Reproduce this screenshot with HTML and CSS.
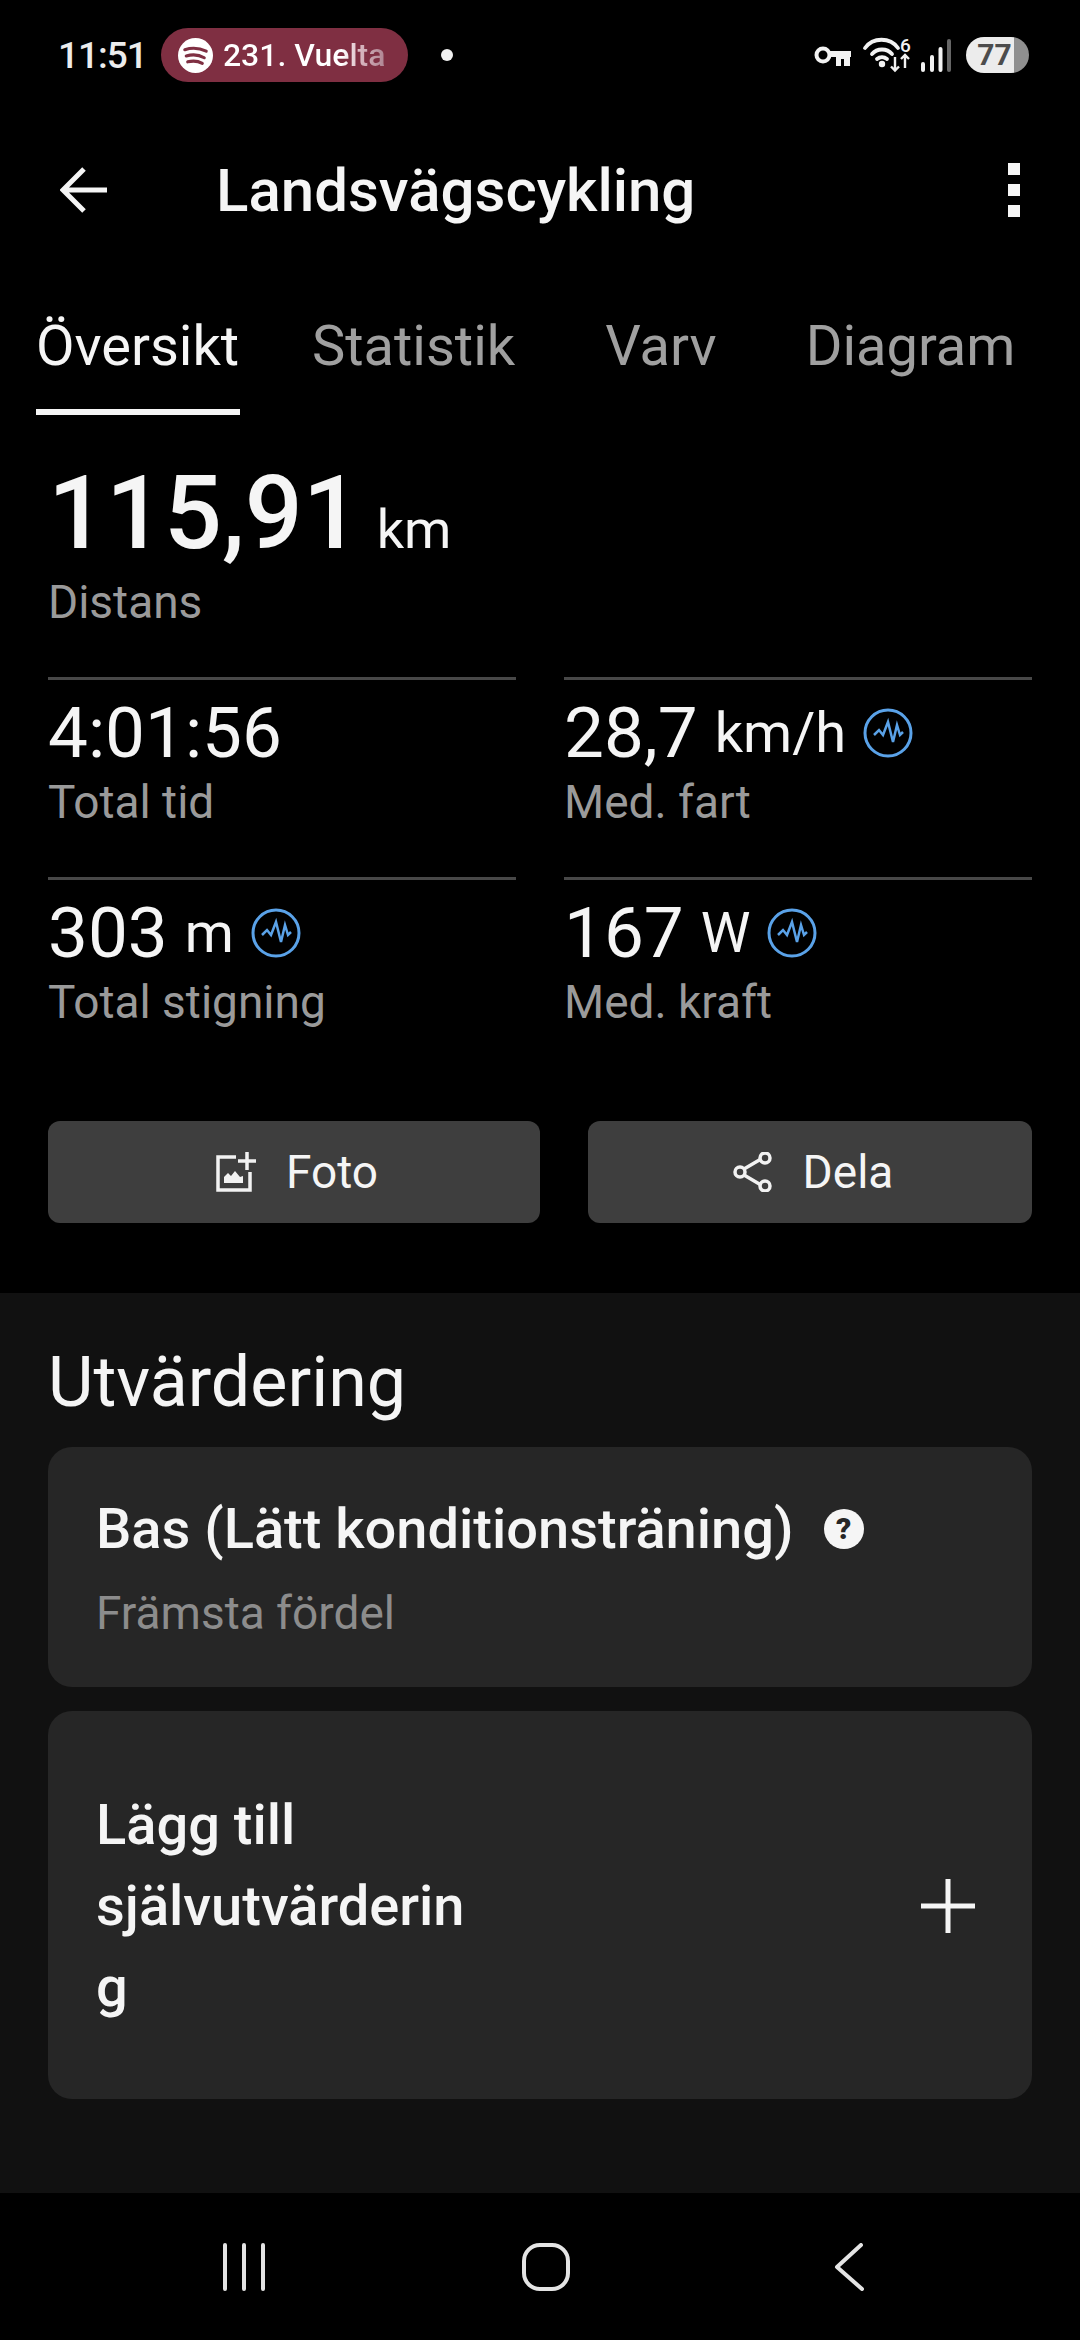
FILE: index.html
```html
<!DOCTYPE html>
<html lang="sv">
<head>
  <meta charset="UTF-8">
  <meta name="viewport" content="width=device-width, initial-scale=1.0">
  <title>Landsvägscykling</title>
  <link rel="stylesheet" href="styles.css">
</head>
<body>
  <div class="app">
    <!-- Status bar -->
    <div class="status-bar">
      <span class="clock">11:51</span>
      <div class="media-pill">
        <svg class="spotify" viewBox="0 0 36 36">
          <circle cx="18" cy="18" r="18" fill="#fff"/>
          <path d="M7 12c7-2.200 15-1.800 22 1.600M8.500 18.500c6-1.700 13-1.300 18.500 1.800M10 24.500c5-1.200 10.500-.9 15 1.500" fill="none" stroke="#7f2f42" stroke-width="3.200" stroke-linecap="round"/>
        </svg>
        <span class="media-text">231. Vuelta</span>
      </div>
      <span class="status-dot"></span>
      <div class="status-icons">
        <svg class="icon-key" viewBox="0 0 37 21">
          <circle cx="9" cy="10" r="6.500" fill="none" stroke="#f2f2f2" stroke-width="4"/>
          <path d="M15 6h22v6h-1v9H22v-9h-7z" fill="#f2f2f2"/>
          <path d="M27 14h3v7h-3z" fill="#000"/>
        </svg>
        <svg class="icon-wifi" viewBox="0 0 48 34">
          <path d="M2 10C10-1 27-1 35 10M9 16c5-6 15-6 20 0M14 21c3-2.500 7-2.500 10 0" fill="none" stroke="#f2f2f2" stroke-width="3.800" stroke-linecap="round"/>
          <circle cx="19" cy="26" r="3.200" fill="#f2f2f2"/>
          <path d="M32 19v14M28 28.500l4 4 4-4M42 30V17M38 21l4-4 4 4" fill="none" stroke="#f2f2f2" stroke-width="2.400"/>
          <text x="37" y="14" class="wifi-six">6</text>
        </svg>
        <svg class="icon-signal" viewBox="0 0 31 33">
          <path d="M2 31v-6M11 31V18M19.500 31V10" stroke="#f2f2f2" stroke-width="4" stroke-linecap="round"/>
          <path d="M28 31V2" stroke="#666" stroke-width="4" stroke-linecap="round"/>
        </svg>
        <div class="battery"><span class="battery-level">77</span></div>
      </div>
    </div>

    <!-- Toolbar -->
    <div class="toolbar">
      <svg class="back-arrow" viewBox="0 0 48 48">
        <path d="M47 24H3M24 3L3 24l21 21" fill="none" stroke="#f5f5f5" stroke-width="5"/>
      </svg>
      <h1 class="title">Landsvägscykling</h1>
      <div class="more"><span></span><span></span><span></span></div>
    </div>

    <!-- Tabs -->
    <div class="tabs">
      <div class="tab tab-active">Översikt</div>
      <div class="tab tab-stats">Statistik</div>
      <div class="tab tab-laps">Varv</div>
      <div class="tab tab-chart">Diagram</div>
    </div>

    <!-- Overview -->
    <div class="overview">
      <div class="distance"><span class="distance-value">115,91</span> <span class="distance-unit">km</span></div>
      <div class="label">Distans</div>

      <div class="stats">
        <div class="stat">
          <div class="stat-value">4:01:56</div>
          <div class="label">Total tid</div>
        </div>
        <div class="stat">
          <div class="stat-value">28,7 <span class="unit">km/h</span>
            <svg class="pulse" viewBox="0 0 50 50"><circle cx="25" cy="25" r="23" fill="none" stroke="#5aa2e8" stroke-width="3"/><path d="M11 27l5-5 4 5 5-13 5 20 4-17 3 10 3-3" fill="none" stroke="#5aa2e8" stroke-width="2.500"/></svg>
          </div>
          <div class="label">Med. fart</div>
        </div>
        <div class="stat">
          <div class="stat-value">303 <span class="unit">m</span>
            <svg class="pulse" viewBox="0 0 50 50"><circle cx="25" cy="25" r="23" fill="none" stroke="#5aa2e8" stroke-width="3"/><path d="M11 27l5-5 4 5 5-13 5 20 4-17 3 10 3-3" fill="none" stroke="#5aa2e8" stroke-width="2.500"/></svg>
          </div>
          <div class="label">Total stigning</div>
        </div>
        <div class="stat">
          <div class="stat-value">167 <span class="unit">W</span>
            <svg class="pulse" viewBox="0 0 50 50"><circle cx="25" cy="25" r="23" fill="none" stroke="#5aa2e8" stroke-width="3"/><path d="M11 27l5-5 4 5 5-13 5 20 4-17 3 10 3-3" fill="none" stroke="#5aa2e8" stroke-width="2.500"/></svg>
          </div>
          <div class="label">Med. kraft</div>
        </div>
      </div>

      <div class="actions">
        <div class="action action-photo">
          <svg class="action-icon" viewBox="0 0 40 40">
            <path d="M20 5H2v33h32V20" fill="none" stroke="#f2f2f2" stroke-width="3.500"/>
            <path d="M8 31v-6l4-4 3 3 4-5 5 6 3-1v7z" fill="#f2f2f2"/>
            <path d="M31 0v18M22 9h18" stroke="#f2f2f2" stroke-width="3.500"/>
          </svg>
          <span>Foto</span>
        </div>
        <div class="action action-share">
          <svg class="action-icon" viewBox="0 0 40 40">
            <path d="M11 17L28 7M11 23l17 10" stroke="#f2f2f2" stroke-width="3.500"/>
            <circle cx="7" cy="20" r="5" fill="#3e3e3e" stroke="#f2f2f2" stroke-width="3.500"/>
            <circle cx="32" cy="6" r="5" fill="#3e3e3e" stroke="#f2f2f2" stroke-width="3.500"/>
            <circle cx="32" cy="34" r="5" fill="#3e3e3e" stroke="#f2f2f2" stroke-width="3.500"/>
          </svg>
          <span>Dela</span>
        </div>
      </div>
    </div>

    <!-- Evaluation -->
    <div class="evaluation">
      <h2 class="section-title">Utvärdering</h2>
      <div class="card card-result">
        <div class="card-heading">
          <span class="card-title">Bas (Lätt konditionsträning)</span>
          <span class="help">?</span>
        </div>
        <div class="card-sub">Främsta fördel</div>
      </div>
      <div class="card card-add">
        <div class="card-title add-title">Lägg till självutvärdering</div>
        <svg class="plus" viewBox="0 0 54 54"><path d="M27 0v54M0 27h54" stroke="#f5f5f5" stroke-width="5"/></svg>
      </div>
    </div>

    <!-- Navigation bar -->
    <div class="nav-bar">
      <svg class="nav-recents" viewBox="0 0 44 48"><path d="M3 2v44M22 2v44M41 2v44" stroke="#e4e4e4" stroke-width="4" stroke-linecap="round"/></svg>
      <svg class="nav-home" viewBox="0 0 48 48"><rect x="2" y="2" width="44" height="44" rx="16" fill="none" stroke="#e4e4e4" stroke-width="4"/></svg>
      <svg class="nav-back" viewBox="0 0 30 48"><path d="M27 2L3 24l25 22" fill="none" stroke="#e4e4e4" stroke-width="4" stroke-linecap="round" stroke-linejoin="round"/></svg>
    </div>
  </div>
</body>
</html>
```

FILE: styles.css
```css
* {
  box-sizing: border-box;
}

body {
  margin: 0;
  background-color: #000;
  font-family: Roboto, "Noto Sans", sans-serif;
  color: #f5f5f5;
}

.app {
  width: 1080px;
  height: 2340px;
  display: flex;
  flex-direction: column;
  overflow: hidden;
}

/* Status bar */
.status-bar {
  height: 110px;
  display: flex;
  align-items: center;
  padding: 0 51px 0 58px;
}

.clock {
  font-size: 37px;
  font-weight: 500;
  letter-spacing: -1px;
  color: #ececec;
}

.media-pill {
  width: 247px;
  height: 54px;
  margin-left: 14px;
  padding-left: 17px;
  display: flex;
  align-items: center;
  gap: 10px;
  border-radius: 27px;
  background-color: #7f2f42;
}

.spotify {
  width: 35px;
  height: 35px;
}

.media-text {
  font-size: 32px;
  font-weight: 500;
  white-space: nowrap;
  background: linear-gradient(90deg, #fff 73%, #d9b7c0 84%, #ad8290 100%);
  -webkit-background-clip: text;
  background-clip: text;
  color: transparent;
}

.status-dot {
  width: 12px;
  height: 12px;
  margin-left: 33px;
  border-radius: 50%;
  background-color: #f0f0f0;
}

.status-icons {
  margin-left: auto;
  display: flex;
  align-items: center;
}

.icon-key {
  width: 37px;
  height: 21px;
}

.icon-wifi {
  width: 48px;
  height: 34px;
  margin-left: 12px;
  overflow: visible;
}

.wifi-six {
  font-size: 19px;
  font-weight: 500;
  fill: #f2f2f2;
}

.icon-signal {
  width: 31px;
  height: 33px;
  margin-left: 10px;
}

.battery {
  width: 63px;
  height: 36px;
  margin-left: 14px;
  border-radius: 18px;
  background: linear-gradient(90deg, #ececec 76%, #8f8f8f 76%);
  text-align: center;
  font-size: 30px;
  font-weight: 700;
  line-height: 36px;
  color: #4c4c4c;
}

.battery-level {
  margin-right: 6px;
}

/* Toolbar */
.toolbar {
  height: 160px;
  display: flex;
  align-items: center;
  padding: 0 60px;
}

.back-arrow {
  width: 48px;
  height: 48px;
}

.title {
  margin: 0 0 0 108px;
  font-size: 60px;
  font-weight: 500;
}

.more {
  margin-left: auto;
  display: flex;
  flex-direction: column;
  gap: 9px;
}

.more span {
  width: 12px;
  height: 12px;
  background-color: #f5f5f5;
}

/* Tabs */
.tabs {
  height: 145px;
  display: flex;
  padding-left: 36px;
}

.tab {
  padding-top: 44px;
  font-size: 56px;
  line-height: 64px;
  color: #a0a0a0;
}

.tab-active {
  width: 204px;
  color: #f5f5f5;
  white-space: nowrap;
  border-bottom: 6px solid #f5f5f5;
}

.tab-stats {
  margin-left: 72px;
}

.tab-laps {
  margin-left: 90px;
}

.tab-chart {
  margin-left: 89px;
}

/* Overview */
.overview {
  padding: 0 48px;
  height: 878px;
}

.distance {
  margin-top: 66px;
  line-height: 64px;
}

.distance-value {
  font-size: 102px;
  font-weight: 500;
}

.distance-unit {
  margin-left: 12px;
  font-size: 54px;
}

.label {
  font-size: 46px;
  line-height: 54px;
  color: #9a9a9a;
}

.stats {
  margin-top: 48px;
  display: grid;
  grid-template-columns: 468px 468px;
  column-gap: 48px;
}

.stat {
  height: 200px;
  padding-top: 11px;
  border-top: 3px solid #484848;
}

.stat-value {
  display: flex;
  align-items: center;
  gap: 17px;
  font-size: 71px;
  line-height: 84px;
}

.unit {
  font-size: 56px;
}

.pulse {
  width: 50px;
  height: 50px;
}

.actions {
  margin-top: 44px;
  display: flex;
  gap: 48px;
}

.action {
  height: 102px;
  padding-left: 6px;
  display: flex;
  align-items: center;
  justify-content: center;
  gap: 30px;
  border-radius: 12px;
  background-color: #3e3e3e;
  font-size: 46px;
}

.action-photo {
  width: 492px;
}

.action-share {
  width: 444px;
}

.action-icon {
  width: 40px;
  height: 40px;
}

/* Evaluation */
.evaluation {
  height: 900px;
  padding: 46px 48px 0;
  background-color: #111;
}

.section-title {
  margin: 0;
  font-size: 70px;
  font-weight: 400;
  line-height: 86px;
}

.card {
  margin-top: 24px;
  padding: 0 48px;
  border-radius: 24px;
  background-color: #262626;
}

.card-result {
  margin-top: 22px;
  height: 240px;
  padding-top: 51px;
}

.card-heading {
  display: flex;
  align-items: center;
  gap: 30px;
}

.card-title {
  font-size: 56px;
  font-weight: 500;
  line-height: 62px;
}

.help {
  width: 40px;
  height: 40px;
  border-radius: 50%;
  background-color: #f5f5f5;
  color: #262626;
  text-align: center;
  font-size: 30px;
  font-weight: 900;
  line-height: 40px;
}

.card-sub {
  margin-top: 26px;
  font-size: 46px;
  line-height: 54px;
  color: #8c8c8c;
}

.card-add {
  height: 388px;
  padding-top: 2px;
  display: flex;
  align-items: center;
  justify-content: space-between;
  padding-right: 57px;
}

.add-title {
  width: 385px;
  line-height: 81px;
  overflow-wrap: anywhere;
}

.plus {
  width: 54px;
  height: 54px;
}

/* Navigation bar */
.nav-bar {
  flex: 1;
  display: flex;
  align-items: center;
  padding: 0 0 0 222px;
}

.nav-recents {
  width: 44px;
  height: 48px;
}

.nav-home {
  width: 48px;
  height: 48px;
  margin-left: 256px;
}

.nav-back {
  width: 30px;
  height: 48px;
  margin-left: 264px;
}
```
